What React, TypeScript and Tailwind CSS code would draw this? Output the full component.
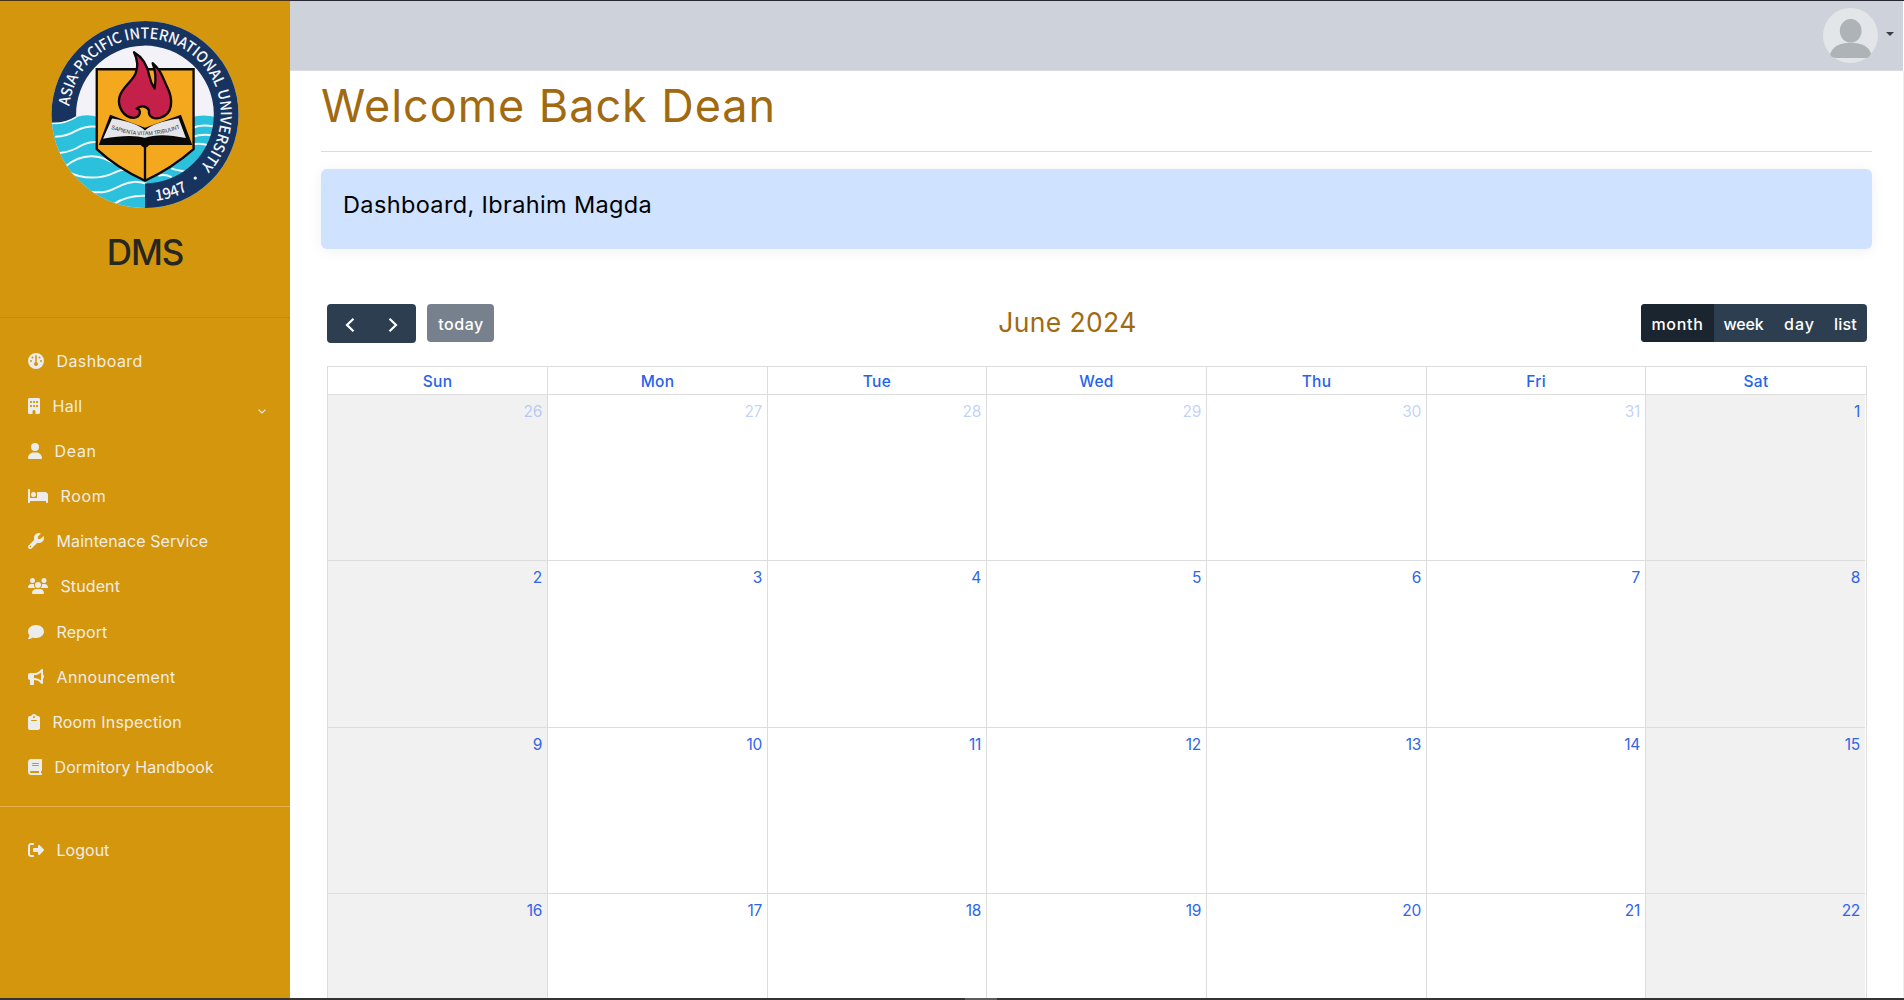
import type { ComponentType } from 'react';
import {
  FaBed,
  FaBook,
  FaBuilding,
  FaBullhorn,
  FaClipboard,
  FaComment,
  FaGauge,
  FaRightFromBracket,
  FaUser,
  FaUsers,
  FaWrench,
} from 'react-icons/fa6';

type NavItem = {
  label: string;
  icon: ComponentType<{ className?: string }>;
  iconWidth: string;
  tracking: string;
  expandable?: boolean;
};

const navItems: NavItem[] = [
  { label: 'Dashboard', icon: FaGauge, iconWidth: 'w-4', tracking: 'tracking-[0.4px]' },
  { label: 'Hall', icon: FaBuilding, iconWidth: 'w-3', tracking: 'tracking-[0.3px]', expandable: true },
  { label: 'Dean', icon: FaUser, iconWidth: 'w-3.5', tracking: 'tracking-[0.7px]' },
  { label: 'Room', icon: FaBed, iconWidth: 'w-5', tracking: 'tracking-[0.7px]' },
  { label: 'Maintenace Service', icon: FaWrench, iconWidth: 'w-4', tracking: 'tracking-[0.1px]' },
  { label: 'Student', icon: FaUsers, iconWidth: 'w-5', tracking: 'tracking-[0.1px]' },
  { label: 'Report', icon: FaComment, iconWidth: 'w-4', tracking: 'tracking-[0.1px]' },
  { label: 'Announcement', icon: FaBullhorn, iconWidth: 'w-4', tracking: 'tracking-[0.35px]' },
  { label: 'Room Inspection', icon: FaClipboard, iconWidth: 'w-3', tracking: 'tracking-[0.2px]' },
  { label: 'Dormitory Handbook', icon: FaBook, iconWidth: 'w-3.5', tracking: 'tracking-[0.1px]' },
];

const logout: NavItem = {
  label: 'Logout',
  icon: FaRightFromBracket,
  iconWidth: 'w-4',
  tracking: 'tracking-[0.02px]',
};

const weekdays = ['Sun', 'Mon', 'Tue', 'Wed', 'Thu', 'Fri', 'Sat'];

const weeks = [
  [26, 27, 28, 29, 30, 31, 1],
  [2, 3, 4, 5, 6, 7, 8],
  [9, 10, 11, 12, 13, 14, 15],
  [16, 17, 18, 19, 20, 21, 22],
];

function UniversityLogo() {
  return (
    <svg viewBox="63 63 564 562" className="h-[187px] w-[188px] overflow-visible" role="img" aria-label="Asia-Pacific International University">
      <defs>
        <clipPath id="seal">
          <circle cx="345" cy="344" r="281" />
        </clipPath>
        <path id="nameArc" d="M118 319 A228 228 0 1 1 489 520" />
        <path id="yearArc" d="M378 604 A262 262 0 0 0 546 512" />
        <path id="mottoArc" d="M243 387 Q345 426 449 386 L470 378" />
      </defs>
      <g clipPath="url(#seal)">
        <rect x="60" y="60" width="570" height="570" fill="#f2f2f8" />
        <path d="M60 370 Q105 372 138 352 Q170 340 205 352 H485 Q520 342 560 352 V630 H60Z" fill="#2bc0dc" />
        <g fill="none" stroke="#f2f8fb" strokeWidth="6">
          <path d="M75 411 Q110 410 140 392 Q170 376 203 381" />
          <path d="M88 460 Q125 456 152 438 Q178 424 203 427" />
          <path d="M105 500 C140 472 172 464 206 472 S250 494 275 498" />
          <path d="M110 514 C160 542 215 536 250 520 S300 508 318 522" />
          <path d="M185 577 C230 582 250 568 275 556 S320 544 350 552" />
          <path d="M252 613 Q290 586 350 588" />
          <path d="M489 384 Q515 372 552 380" />
          <path d="M489 411 Q515 402 550 407" />
          <path d="M489 434 Q508 428 542 438" />
          <path d="M424 506 Q440 512 470 516" />
          <path d="M385 528 Q405 522 425 532" />
        </g>
        <path
          d="M55 368 V55 H635 V635 H345 V551 A207 207 0 1 0 138 352 Q105 372 55 368Z"
          fill="#17335f"
        />
        <path d="M60 371 Q105 373 139 351" fill="none" stroke="#f2f8fb" strokeWidth="5" />
      </g>
      <g fill="#f5f6fa" fontFamily='"Noto Sans CJK SC", "Noto Sans", sans-serif' fontWeight="500">
        <text fontSize="45">
          <textPath href="#nameArc" textLength="863" lengthAdjust="spacingAndGlyphs">ASIA-PACIFIC INTERNATIONAL UNIVERSITY</textPath>
        </text>
        <text fontSize="46">
          <textPath href="#yearArc" textLength="101" lengthAdjust="spacingAndGlyphs">1947</textPath>
        </text>
        <circle cx="496" cy="535" r="5" />
      </g>
      <path d="M200 208 H491 V448 Q425 506 345 543 Q260 504 200 448Z" fill="#f4a81d" stroke="#0b0808" strokeWidth="7" />
      <path d="M345 435 V543" stroke="#0b0808" strokeWidth="7" />
      <path d="M206 436 L240 345 Q300 368 345 384 Q390 368 453 345 L487 436 H358 Q345 452 332 436Z" fill="#0b0808" />
      <path d="M246 356 Q320 368 345 392 Q370 368 446 355 L468 415 Q390 398 345 414 Q300 402 219 417Z" fill="#e6e6ea" />
      <path
        d="M312 157 C338 172 352 196 358 228 C361 245 366 254 374 266 C378 240 378 214 368 190 C396 214 398 234 412 262 C430 298 430 344 390 354 C372 358 354 352 357 332 C350 318 334 316 320 326 C334 326 334 352 312 354 C280 354 262 320 268 292 C276 262 302 250 316 222 C326 200 322 178 312 157Z"
        fill="#c5204a"
        stroke="#0b0808"
        strokeWidth="7"
        strokeLinejoin="round"
      />
      <text fontSize="17" fontWeight="500" fontFamily='"Liberation Sans", sans-serif' fill="#222">
        <textPath href="#mottoArc" textLength="212" lengthAdjust="spacingAndGlyphs">SAPIENTA VITAM TRIBUUNT</textPath>
      </text>
    </svg>
  );
}

function NavLink({ item }: { item: NavItem }) {
  const Icon = item.icon;
  return (
    <a className="flex h-[45.15px] items-center pl-7 text-[16px] text-[#f1ede4]">
      <span className={`flex h-4 shrink-0 items-center ${item.iconWidth}`}>
        <Icon className="h-4 w-full text-[#ececec]" />
      </span>
      <span className={`ml-[12.5px] whitespace-nowrap ${item.tracking}`}>{item.label}</span>
      {item.expandable && (
        <svg viewBox="0 0 8 5" className="mt-3 mr-6 ml-auto h-[5px] w-2" fill="none" stroke="#f1ede4" strokeWidth="1.2">
          <path d="M0.6 0.6 L4 4 L7.4 0.6" />
        </svg>
      )}
    </a>
  );
}

function Sidebar() {
  return (
    <aside className="flex w-[290px] shrink-0 flex-col bg-[#d4960c]">
      <div className="flex h-[317px] flex-col items-center border-b border-[#c78b0b] pt-5">
        <UniversityLogo />
        <h1 className="mt-[22px] text-[35px] leading-[45px] font-medium tracking-[-1.1px] text-[#272721]">DMS</h1>
      </div>
      <nav className="flex h-[489px] flex-col border-b border-[#e6b04a] pt-[20.2px]">
        {navItems.map((item) => (
          <NavLink key={item.label} item={item} />
        ))}
      </nav>
      <div className="pt-[20.5px]">
        <NavLink item={logout} />
      </div>
    </aside>
  );
}

function TopBar() {
  return (
    <header className="mr-px flex h-[70px] items-center justify-end border-b border-[#d9dce2] bg-[#ced3db] pr-[9px]">
      <svg viewBox="0 0 55 55" className="size-[55px]">
        <circle cx="27.5" cy="27.5" r="27.5" fill="#e2e6e8" />
        <ellipse cx="27.7" cy="22.8" rx="10.9" ry="11.8" fill="#adb3b6" />
        <path d="M7 46.5 C9.5 38.5 17 34.8 27.7 34.8 S45.8 38.5 48 45.5 Q46.5 49.8 43 50 H12.5 Q8.5 49.5 7 46.5Z" fill="#adb3b6" />
      </svg>
      <svg viewBox="0 0 8 4" className="mt-[-3px] ml-2 h-1 w-2" fill="#3a3d42">
        <path d="M0 0 H8 L4 4Z" />
      </svg>
    </header>
  );
}

function Toolbar() {
  return (
    <div className="flex h-[39px] items-start justify-between text-[16px] font-medium text-white">
      <div className="flex items-start gap-[11px]">
        <div className="flex h-[39px] w-[89px] items-center justify-around rounded bg-[#2c3e50] px-0.5 pt-0.5">
          <svg viewBox="0 0 10 16" className="h-4 w-2.5" fill="none" stroke="white" strokeWidth="2.2">
            <path d="M8.5 1.8 L2 8 L8.5 14.2" />
          </svg>
          <svg viewBox="0 0 10 16" className="h-4 w-2.5" fill="none" stroke="white" strokeWidth="2.2">
            <path d="M1.5 1.8 L8 8 L1.5 14.2" />
          </svg>
        </div>
        <button className="h-[38px] w-[67px] rounded bg-[#76818d] pt-0.5 pl-px tracking-[0.5px]">today</button>
      </div>
      <h2 className="text-[26.5px] leading-[37px] font-normal tracking-[0.35px] text-[#a16a10]">June 2024</h2>
      <div className="flex h-[38px] overflow-hidden rounded bg-[#2c3e50]">
        <button className="w-[73px] bg-[#1a252f] pt-0.5 tracking-[0.7px]">month</button>
        <button className="w-[60px] pt-0.5 pr-px tracking-[-0.2px]">week</button>
        <button className="w-[51px] pt-0.5 tracking-[1px]">day</button>
        <button className="w-[42px] pt-0.5 pr-px tracking-[0.2px]">list</button>
      </div>
    </div>
  );
}

function Calendar() {
  return (
    <section className="mt-[55px] ml-1.5 w-[1540px]">
      <Toolbar />
      <div className="mt-[23px] border-x border-t border-[#dddddd]">
        <div className="grid h-7 grid-cols-[220px_220px_219px_220px_220px_219px_1fr] border-b border-[#dddddd]">
          {weekdays.map((day, i) => (
            <div
              key={day}
              className={`flex items-center justify-center pt-0.5 text-[15.5px] font-medium tracking-[0.3px] text-[#2563eb] ${i < 6 ? 'border-r border-[#dddddd]' : ''}`}
            >
              {day}
            </div>
          ))}
        </div>
        {weeks.map((week, w) => (
          <div
            key={w}
            className="mr-px grid h-[166.4px] grid-cols-[220px_220px_219px_220px_220px_219px_1fr] border-b border-[#dddddd]"
          >
            {week.map((date, i) => (
              <div
                key={date}
                className={`pt-[5px] pr-[5px] text-right text-[15.5px] leading-[23px] tracking-[-0.3px] ${
                  w === 0 && i < 6 ? 'text-[#2563eb]/30' : 'text-[#2f66e8]'
                } ${i === 0 || i === 6 ? 'bg-[#f1f1f1]' : ''} ${i < 6 ? 'border-r border-[#dddddd]' : ''}`}
              >
                {date}
              </div>
            ))}
          </div>
        ))}
      </div>
    </section>
  );
}

export default function App() {
  return (
    <div className="flex h-[1000px] w-[1904px] flex-col overflow-hidden bg-white font-['Inter',sans-serif]">
      <div className="flex h-px shrink-0">
        <div className="w-[290px] bg-[#4a3315]" />
        <div className="flex-1 bg-[#262733]" />
      </div>
      <div className="flex min-h-0 flex-1">
        <Sidebar />
        <div className="flex min-w-0 flex-1 flex-col overflow-hidden">
          <TopBar />
          <main className="min-h-0 flex-1 overflow-hidden border-r border-[#f0f0f0] pr-[31px] pl-[31px]">
            <h1 className="h-[81px] border-b border-[#e2dac8] pt-[8px] text-[45px] leading-[54px] font-normal tracking-[0.95px] text-[#a16a10]">
              Welcome Back Dean
            </h1>
            <div className="mt-[17px] h-20 rounded-md bg-[#cfe2ff] pt-5 pl-[22px] text-[23.5px] leading-[31px] font-normal tracking-[0.36px] text-black shadow-[0_2px_14px_rgba(0,0,0,0.06)]">
              Dashboard, Ibrahim Magda
            </div>
            <Calendar />
          </main>
        </div>
      </div>
      <div className="flex h-0.5 shrink-0 bg-[#333333]">
        <div className="ml-[965px] w-8 bg-[#5c5c5c]" />
      </div>
    </div>
  );
}
